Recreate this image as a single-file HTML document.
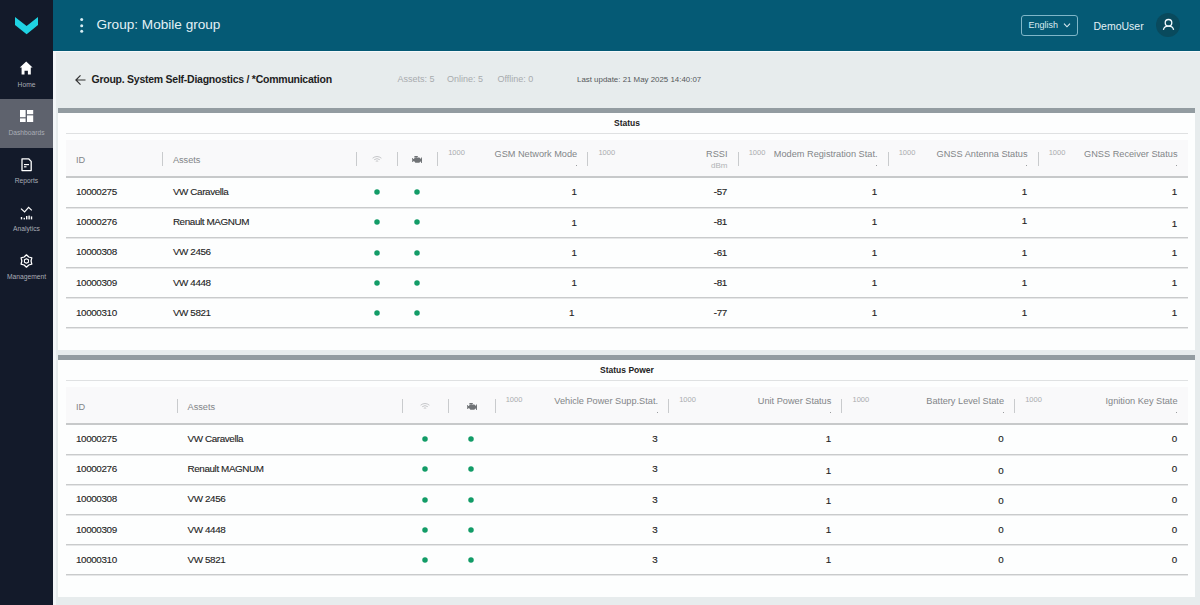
<!DOCTYPE html>
<html><head><meta charset="utf-8">
<style>
*{box-sizing:border-box;margin:0;padding:0}
html,body{width:1200px;height:605px;overflow:hidden}
body{position:relative;background:#e7eced;font-family:"Liberation Sans",sans-serif;color:#222}
.abs{position:absolute}
#side{left:0;top:0;width:53px;height:605px;background:#131a2a}
#active{left:0;top:99px;width:53px;height:49px;background:#5e626d}
.nav{position:absolute;left:0;width:53px;text-align:center;font-size:6.7px;color:#a9adb6;white-space:nowrap}
#hdr{left:53px;top:0;width:1147px;height:51px;background:#055a75}
#hline{left:53px;top:51px;width:1147px;height:1px;background:#f6f9fb}
#lstrip{left:53px;top:51px;width:3px;height:554px;background:#f3f6f8}
.title{left:96.5px;top:17px;font-size:13.6px;color:#e3f1f6;white-space:nowrap}
.card{position:absolute;left:58px;width:1137px;height:242px;background:#fdfefe}
.bar{position:absolute;left:0;top:0;width:1137px;height:4.6px;background:#939ca1}
.ctitle{position:absolute;left:8px;width:1122px;text-align:center;font-weight:bold;font-size:8.5px;color:#222;top:9.5px}
.cline{position:absolute;left:8px;top:25px;width:1122px;height:1px;background:#dfe1e2}
.thead{position:absolute;left:8px;top:32px;width:1122px;height:38px;background:#f9f9fa;border-bottom:2px solid #c7c9ca}
.rline{position:absolute;left:8px;width:1122px;height:2px;background:linear-gradient(#c9cbcc 50%,#e6e7e8 50%)}
.t{position:absolute;white-space:nowrap}
.hd{font-size:9.2px;color:#828588}
.k{font-size:7.5px;color:#a9acaf}
.sep{position:absolute;width:1px;height:14px;background:#c9cbcd}
.v{font-size:9.9px;letter-spacing:-0.4px;color:#1f1f1f;-webkit-text-stroke:0.12px #1f1f1f}
.b{font-weight:normal;font-size:9.8px;letter-spacing:-0.3px;-webkit-text-stroke:0.15px #1f1f1f}
.dot{position:absolute;width:5.5px;height:5.5px;border-radius:50%;background:#169e63}
</style></head><body>
<div id="side" class="abs"></div>
<div id="active" class="abs"></div>
<svg class="abs" style="left:0;top:0" width="53" height="300" viewBox="0 0 53 300">
  <polygon points="15,17 26.6,26 38,17 38,25 26.6,34.3 15,25" fill="#1fd3e3"/>
  <!-- home -->
  <path d="M26.2 61.5 L19.8 67.6 L21.6 67.6 L21.6 74.5 L24.5 74.5 L24.5 70.8 L27.9 70.8 L27.9 74.5 L30.8 74.5 L30.8 67.6 L32.6 67.6 Z" fill="#fff"/>
  <!-- dashboards -->
  <rect x="20" y="110" width="5.6" height="7.2" fill="#fff"/>
  <rect x="20" y="118.4" width="5.6" height="3.6" fill="#fff"/>
  <rect x="27" y="110" width="6.2" height="4.2" fill="#fff"/>
  <rect x="27" y="115.4" width="6.2" height="6.6" fill="#fff"/>
  <!-- reports -->
  <path d="M22 158.8 L28.6 158.8 L31.2 161.4 L31.2 170.6 L22 170.6 Z" fill="none" stroke="#fff" stroke-width="1.3" stroke-linejoin="round"/>
  <rect x="24" y="164" width="5" height="1.2" fill="#fff"/>
  <rect x="24" y="166.2" width="2.5" height="1.2" fill="#fff"/>
  <!-- analytics -->
  <polyline points="21,208.6 24.6,212 28.6,207.4 31.8,210.4" fill="none" stroke="#fff" stroke-width="1.2"/>
  <rect x="20.8" y="217" width="1.4" height="2.4" fill="#fff"/>
  <rect x="23.6" y="217.8" width="1.4" height="1.6" fill="#fff"/>
  <rect x="26" y="216" width="1.4" height="3.4" fill="#fff"/>
  <rect x="28.4" y="215.6" width="1.4" height="3.8" fill="#fff"/>
  <rect x="30.8" y="216.4" width="1.4" height="3" fill="#fff"/>
  <!-- gear -->
  <path d="M26.45 254.80 L24.15 257.02 L21.08 257.90 L21.85 261.00 L21.08 264.10 L24.15 264.98 L26.45 267.20 L28.75 264.98 L31.82 264.10 L31.05 261.00 L31.82 257.90 L28.75 257.02 Z" fill="none" stroke="#fff" stroke-width="1.25" stroke-linejoin="round"/>
  <path d="M26.45 258.70 L24.46 259.85 L24.46 262.15 L26.45 263.30 L28.44 262.15 L28.44 259.85 Z" fill="none" stroke="#fff" stroke-width="1.1" stroke-linejoin="round"/>
</svg>
<div class="nav" style="top:80.8px">Home</div>
<div class="nav" style="top:128.5px">Dashboards</div>
<div class="nav" style="top:177px">Reports</div>
<div class="nav" style="top:225px">Analytics</div>
<div class="nav" style="top:273px">Management</div>

<div id="hdr" class="abs"></div>
<div id="hline" class="abs"></div>
<div id="lstrip" class="abs"></div>
<svg class="abs" style="left:78px;top:16px" width="8" height="20">
  <circle cx="3.7" cy="3.6" r="1.5" fill="#d9eef4"/>
  <circle cx="3.7" cy="9.7" r="1.5" fill="#d9eef4"/>
  <circle cx="3.7" cy="15.3" r="1.5" fill="#d9eef4"/>
</svg>
<div class="abs title">Group: Mobile group</div>

<div class="abs" style="left:1021px;top:15px;width:57px;height:21px;border:1.2px solid #7fb6c8;border-radius:3px"></div>
<div class="abs t" style="left:1028.5px;top:20.4px;font-size:9px;color:#dcecf2">English</div>
<svg class="abs" style="left:1062px;top:21px" width="10" height="10"><polyline points="2,2.6 5,5.8 8,2.6" fill="none" stroke="#dcecf2" stroke-width="1.1"/></svg>
<div class="abs t" style="left:1093.5px;top:19.8px;font-size:10.5px;color:#e3f1f6">DemoUser</div>
<div class="abs" style="left:1156px;top:13.3px;width:24px;height:24px;border-radius:50%;background:#094a5d"></div>
<svg class="abs" style="left:1155.5px;top:13px" width="25" height="25">
  <circle cx="12.5" cy="9.8" r="3.3" fill="none" stroke="#f4fbff" stroke-width="1.3"/>
  <path d="M7.4 16.9 C7.8 14.4 10 13.2 12.5 13.2 C15 13.2 17.2 14.4 17.6 16.9" fill="none" stroke="#f4fbff" stroke-width="1.3"/>
</svg>

<svg class="abs" style="left:74px;top:73px" width="14" height="14"><path d="M11.5 7 L2 7 M6.5 2.4 L1.9 7 L6.5 11.6" fill="none" stroke="#333" stroke-width="1.2"/></svg>
<div class="abs t" style="left:91.5px;top:73.2px;font-size:10.5px;font-weight:bold;letter-spacing:-0.25px;color:#1e1e1e">Group. System Self-Diagnostics / *Communication</div>
<div class="abs t" style="left:397.5px;top:74px;font-size:9px;color:#a7abae">Assets: 5</div>
<div class="abs t" style="left:447px;top:74px;font-size:9px;color:#a7abae">Online: 5</div>
<div class="abs t" style="left:497.5px;top:74px;font-size:9px;color:#a7abae">Offline: 0</div>
<div class="abs t" style="left:577px;top:75px;font-size:7.9px;color:#55595c">Last update: 21 May 2025 14:40:07</div>

<!-- CARD 1 -->
<!-- CARD 2 -->

<div id="tables"></div>
<div class="card" style="top:108px">
<div class="bar"></div>
<div class="ctitle">Status</div>
<div class="cline"></div>
<div class="thead"></div>
<div class="t hd" style="left:18px;top:46.5px">ID</div>
<div class="sep" style="left:103.9px;top:44px"></div>
<div class="t hd" style="left:114.9px;top:46.5px">Assets</div>
<div class="sep" style="left:298.0px;top:44px"></div>
<svg class="t" style="left:313.75px;top:47.6px" width="10" height="6.5" viewBox="0 0 10 6.5"><path d="M0.6 2.2 Q5 -1.2 9.4 2.2" fill="none" stroke="#bfc1c3" stroke-width="0.9"/><path d="M2.2 3.7 Q5 1.6 7.8 3.7" fill="none" stroke="#bfc1c3" stroke-width="0.9"/><path d="M3.8 5.3 Q5 4.4 6.2 5.3" fill="none" stroke="#bfc1c3" stroke-width="0.9"/></svg>
<div class="sep" style="left:338.5px;top:44px"></div>
<svg class="t" style="left:354.25px;top:47.8px" width="10" height="7" viewBox="0 0 10 7"><path d="M2.4 0 H5.8 V0.9 H4.6 V1.5 H7.4 L8.6 2.8 L9.1 2.8 V1.4 H10 V7 H9.1 V5.4 L8.6 5.4 L7.2 6.8 H3.4 L2.2 5.2 H1.1 V6 H0.2 V2.0 H1.1 V3 H2.2 L2.2 1.5 H3.6 V0.9 H2.4 Z" fill="#707376"/></svg>
<div class="sep" style="left:379.0px;top:44px"></div>
<div class="t k" style="left:390.2px;top:40px">1000</div>
<div class="t hd" style="right:617.8px;top:41px">GSM Network Mode</div>
<div class="t" style="left:517.7px;top:56.9px;width:1px;height:1px;background:#9a9c9e"></div>
<div class="sep" style="left:529.2px;top:44px"></div>
<div class="t k" style="left:540.4000000000001px;top:40px">1000</div>
<div class="t hd" style="right:467.5px;top:41px">RSSI</div>
<div class="t k" style="right:467.5px;top:52.8px;font-size:8px;color:#b0b3b5">dBm</div>
<div class="sep" style="left:679.5px;top:44px"></div>
<div class="t k" style="left:690.7px;top:40px">1000</div>
<div class="t hd" style="right:317.5px;top:41px">Modem Registration Stat.</div>
<div class="t" style="left:818.0px;top:56.9px;width:1px;height:1px;background:#9a9c9e"></div>
<div class="sep" style="left:829.5px;top:44px"></div>
<div class="t k" style="left:840.7px;top:40px">1000</div>
<div class="t hd" style="right:167.5px;top:41px">GNSS Antenna Status</div>
<div class="t" style="left:968.0px;top:56.9px;width:1px;height:1px;background:#9a9c9e"></div>
<div class="sep" style="left:979.5px;top:44px"></div>
<div class="t k" style="left:990.7px;top:40px">1000</div>
<div class="t hd" style="right:17.5px;top:41px">GNSS Receiver Status</div>
<div class="t" style="left:1118.0px;top:56.9px;width:1px;height:1px;background:#9a9c9e"></div>
<div class="t v" style="left:18px;top:77.8px">10000275</div>
<div class="t v" style="left:114.9px;top:77.8px">VW Caravella</div>
<svg class="t" style="left:314.75px;top:80px" width="8" height="8"><circle cx="4" cy="4" r="2.75" fill="#129c67"/></svg>
<svg class="t" style="left:355px;top:80px" width="8" height="8"><circle cx="4" cy="4" r="2.75" fill="#129c67"/></svg>
<div class="t v b" style="right:618.3px;top:78.1px">1</div>
<div class="t v b" style="right:468.0px;top:78.1px">-57</div>
<div class="t v b" style="right:318.0px;top:78.1px">1</div>
<div class="t v b" style="right:168.0px;top:78.1px">1</div>
<div class="t v b" style="right:18.0px;top:78.1px">1</div>
<div class="rline" style="top:99px"></div>
<div class="t v" style="left:18px;top:107.8px">10000276</div>
<div class="t v" style="left:114.9px;top:107.8px">Renault MAGNUM</div>
<svg class="t" style="left:314.75px;top:110px" width="8" height="8"><circle cx="4" cy="4" r="2.75" fill="#129c67"/></svg>
<svg class="t" style="left:355px;top:110px" width="8" height="8"><circle cx="4" cy="4" r="2.75" fill="#129c67"/></svg>
<div class="t v b" style="right:618.3px;top:109.1px">1</div>
<div class="t v b" style="right:468.0px;top:108.1px">-81</div>
<div class="t v b" style="right:318.0px;top:108.1px">1</div>
<div class="t v b" style="right:168.0px;top:106.6px">1</div>
<div class="t v b" style="right:18.0px;top:109.6px">1</div>
<div class="rline" style="top:129px"></div>
<div class="t v" style="left:18px;top:138.3px">10000308</div>
<div class="t v" style="left:114.9px;top:138.3px">VW 2456</div>
<svg class="t" style="left:314.75px;top:140.5px" width="8" height="8"><circle cx="4" cy="4" r="2.75" fill="#129c67"/></svg>
<svg class="t" style="left:355px;top:140.5px" width="8" height="8"><circle cx="4" cy="4" r="2.75" fill="#129c67"/></svg>
<div class="t v b" style="right:618.3px;top:138.60000000000002px">1</div>
<div class="t v b" style="right:468.0px;top:138.60000000000002px">-61</div>
<div class="t v b" style="right:318.0px;top:138.60000000000002px">1</div>
<div class="t v b" style="right:168.0px;top:138.60000000000002px">1</div>
<div class="t v b" style="right:18.0px;top:138.60000000000002px">1</div>
<div class="rline" style="top:159px"></div>
<div class="t v" style="left:18px;top:168.60000000000002px">10000309</div>
<div class="t v" style="left:114.9px;top:168.60000000000002px">VW 4448</div>
<svg class="t" style="left:314.75px;top:170.8px" width="8" height="8"><circle cx="4" cy="4" r="2.75" fill="#129c67"/></svg>
<svg class="t" style="left:355px;top:170.8px" width="8" height="8"><circle cx="4" cy="4" r="2.75" fill="#129c67"/></svg>
<div class="t v b" style="right:618.3px;top:168.90000000000003px">1</div>
<div class="t v b" style="right:468.0px;top:168.90000000000003px">-81</div>
<div class="t v b" style="right:318.0px;top:168.90000000000003px">1</div>
<div class="t v b" style="right:168.0px;top:168.90000000000003px">1</div>
<div class="t v b" style="right:18.0px;top:168.90000000000003px">1</div>
<div class="rline" style="top:189px"></div>
<div class="t v" style="left:18px;top:198.8px">10000310</div>
<div class="t v" style="left:114.9px;top:198.8px">VW 5821</div>
<svg class="t" style="left:314.75px;top:201px" width="8" height="8"><circle cx="4" cy="4" r="2.75" fill="#129c67"/></svg>
<svg class="t" style="left:355px;top:201px" width="8" height="8"><circle cx="4" cy="4" r="2.75" fill="#129c67"/></svg>
<div class="t v b" style="right:620.8px;top:199.10000000000002px">1</div>
<div class="t v b" style="right:468.0px;top:199.10000000000002px">-77</div>
<div class="t v b" style="right:318.0px;top:199.10000000000002px">1</div>
<div class="t v b" style="right:168.0px;top:199.10000000000002px">1</div>
<div class="t v b" style="right:18.0px;top:199.10000000000002px">1</div>
<div class="rline" style="top:219px"></div>
</div>
<div class="card" style="top:355px">
<div class="bar"></div>
<div class="ctitle">Status Power</div>
<div class="cline"></div>
<div class="thead"></div>
<div class="t hd" style="left:18px;top:46.5px">ID</div>
<div class="sep" style="left:118.5px;top:44px"></div>
<div class="t hd" style="left:129.5px;top:46.5px">Assets</div>
<div class="sep" style="left:343.5px;top:44px"></div>
<svg class="t" style="left:362.3px;top:47.6px" width="10" height="6.5" viewBox="0 0 10 6.5"><path d="M0.6 2.2 Q5 -1.2 9.4 2.2" fill="none" stroke="#bfc1c3" stroke-width="0.9"/><path d="M2.2 3.7 Q5 1.6 7.8 3.7" fill="none" stroke="#bfc1c3" stroke-width="0.9"/><path d="M3.8 5.3 Q5 4.4 6.2 5.3" fill="none" stroke="#bfc1c3" stroke-width="0.9"/></svg>
<div class="sep" style="left:390.1px;top:44px"></div>
<svg class="t" style="left:408.8px;top:47.8px" width="10" height="7" viewBox="0 0 10 7"><path d="M2.4 0 H5.8 V0.9 H4.6 V1.5 H7.4 L8.6 2.8 L9.1 2.8 V1.4 H10 V7 H9.1 V5.4 L8.6 5.4 L7.2 6.8 H3.4 L2.2 5.2 H1.1 V6 H0.2 V2.0 H1.1 V3 H2.2 L2.2 1.5 H3.6 V0.9 H2.4 Z" fill="#707376"/></svg>
<div class="sep" style="left:436.5px;top:44px"></div>
<div class="t k" style="left:447.7px;top:40px">1000</div>
<div class="t hd" style="right:537.0px;top:41px">Vehicle Power Supp.Stat.</div>
<div class="t" style="left:598.5px;top:56.9px;width:1px;height:1px;background:#9a9c9e"></div>
<div class="sep" style="left:610.0px;top:44px"></div>
<div class="t k" style="left:621.2px;top:40px">1000</div>
<div class="t hd" style="right:363.70000000000005px;top:41px">Unit Power Status</div>
<div class="t" style="left:771.8px;top:56.9px;width:1px;height:1px;background:#9a9c9e"></div>
<div class="sep" style="left:783.3px;top:44px"></div>
<div class="t k" style="left:794.5px;top:40px">1000</div>
<div class="t hd" style="right:191.0px;top:41px">Battery Level State</div>
<div class="t" style="left:944.5px;top:56.9px;width:1px;height:1px;background:#9a9c9e"></div>
<div class="sep" style="left:956.0px;top:44px"></div>
<div class="t k" style="left:967.2px;top:40px">1000</div>
<div class="t hd" style="right:17.5px;top:41px">Ignition Key State</div>
<div class="t" style="left:1118.0px;top:56.9px;width:1px;height:1px;background:#9a9c9e"></div>
<div class="t v" style="left:18px;top:77.8px">10000275</div>
<div class="t v" style="left:129.5px;top:77.8px">VW Caravella</div>
<svg class="t" style="left:363.3px;top:80px" width="8" height="8"><circle cx="4" cy="4" r="2.75" fill="#129c67"/></svg>
<svg class="t" style="left:409px;top:80px" width="8" height="8"><circle cx="4" cy="4" r="2.75" fill="#129c67"/></svg>
<div class="t v b" style="right:537.5px;top:78.1px">3</div>
<div class="t v b" style="right:364.20000000000005px;top:78.1px">1</div>
<div class="t v b" style="right:191.5px;top:78.1px">0</div>
<div class="t v b" style="right:18.0px;top:78.1px">0</div>
<div class="rline" style="top:99px"></div>
<div class="t v" style="left:18px;top:107.8px">10000276</div>
<div class="t v" style="left:129.5px;top:107.8px">Renault MAGNUM</div>
<svg class="t" style="left:363.3px;top:110px" width="8" height="8"><circle cx="4" cy="4" r="2.75" fill="#129c67"/></svg>
<svg class="t" style="left:409px;top:110px" width="8" height="8"><circle cx="4" cy="4" r="2.75" fill="#129c67"/></svg>
<div class="t v b" style="right:537.5px;top:108.1px">3</div>
<div class="t v b" style="right:364.20000000000005px;top:109.89999999999999px">1</div>
<div class="t v b" style="right:191.5px;top:109.69999999999999px">0</div>
<div class="t v b" style="right:18.0px;top:108.1px">0</div>
<div class="rline" style="top:129px"></div>
<div class="t v" style="left:18px;top:138.3px">10000308</div>
<div class="t v" style="left:129.5px;top:138.3px">VW 2456</div>
<svg class="t" style="left:363.3px;top:140.5px" width="8" height="8"><circle cx="4" cy="4" r="2.75" fill="#129c67"/></svg>
<svg class="t" style="left:409px;top:140.5px" width="8" height="8"><circle cx="4" cy="4" r="2.75" fill="#129c67"/></svg>
<div class="t v b" style="right:537.5px;top:138.60000000000002px">3</div>
<div class="t v b" style="right:364.20000000000005px;top:140.40000000000003px">1</div>
<div class="t v b" style="right:191.5px;top:140.00000000000003px">0</div>
<div class="t v b" style="right:18.0px;top:138.60000000000002px">0</div>
<div class="rline" style="top:159px"></div>
<div class="t v" style="left:18px;top:168.60000000000002px">10000309</div>
<div class="t v" style="left:129.5px;top:168.60000000000002px">VW 4448</div>
<svg class="t" style="left:363.3px;top:170.8px" width="8" height="8"><circle cx="4" cy="4" r="2.75" fill="#129c67"/></svg>
<svg class="t" style="left:409px;top:170.8px" width="8" height="8"><circle cx="4" cy="4" r="2.75" fill="#129c67"/></svg>
<div class="t v b" style="right:537.5px;top:168.90000000000003px">3</div>
<div class="t v b" style="right:364.20000000000005px;top:168.90000000000003px">1</div>
<div class="t v b" style="right:191.5px;top:168.90000000000003px">0</div>
<div class="t v b" style="right:18.0px;top:168.90000000000003px">0</div>
<div class="rline" style="top:189px"></div>
<div class="t v" style="left:18px;top:198.8px">10000310</div>
<div class="t v" style="left:129.5px;top:198.8px">VW 5821</div>
<svg class="t" style="left:363.3px;top:201px" width="8" height="8"><circle cx="4" cy="4" r="2.75" fill="#129c67"/></svg>
<svg class="t" style="left:409px;top:201px" width="8" height="8"><circle cx="4" cy="4" r="2.75" fill="#129c67"/></svg>
<div class="t v b" style="right:537.5px;top:199.10000000000002px">3</div>
<div class="t v b" style="right:364.20000000000005px;top:199.10000000000002px">1</div>
<div class="t v b" style="right:191.5px;top:199.10000000000002px">0</div>
<div class="t v b" style="right:18.0px;top:199.10000000000002px">0</div>
<div class="rline" style="top:219px"></div>
</div>
</body></html>
